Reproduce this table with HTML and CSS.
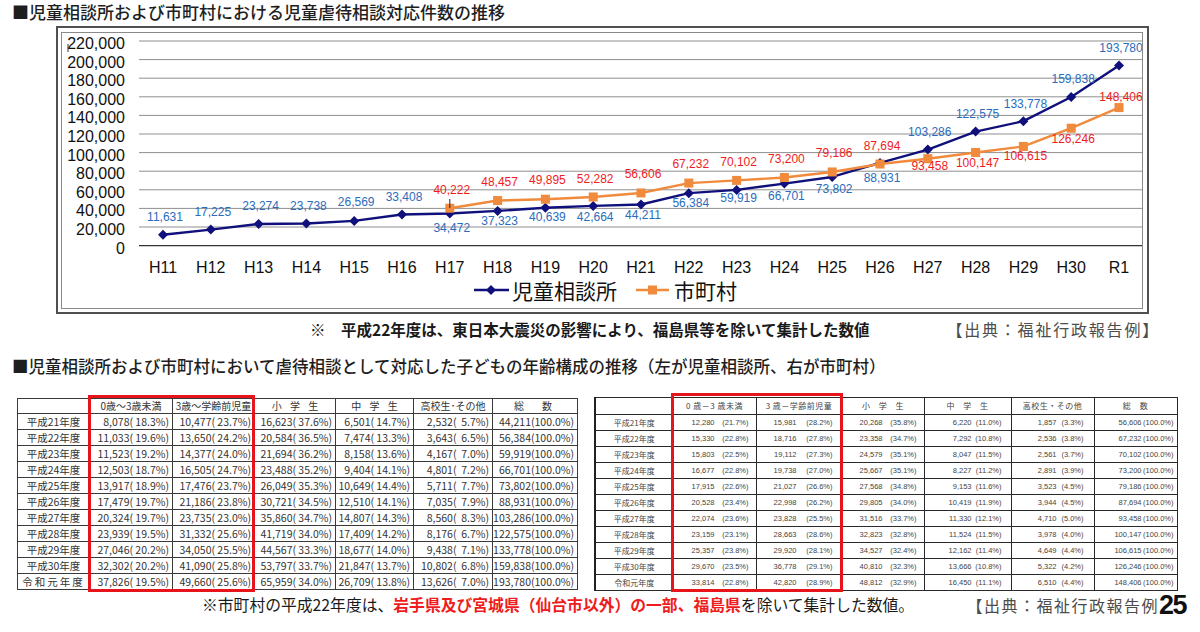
FILE: index.html
```html
<!DOCTYPE html>
<html lang="ja">
<head>
<meta charset="utf-8">
<title>児童虐待相談対応件数の推移</title>
<link rel="stylesheet" href="styles.css">
</head>
<body>
<div class="page">
  <h1 class="sec-title t1">■児童相談所および市町村における児童虐待相談対応件数の推移</h1>
  <div class="chart-frame">
    <div class="chart-inner">
      <svg id="chart" class="chart" width="1080" height="275" viewBox="62 33 1080 275" xmlns="http://www.w3.org/2000/svg"></svg>
    </div>
  </div>
  <div class="note-row">
    <p class="note">※　平成22年度は、東日本大震災の影響により、福島県等を除いて集計した数値</p>
    <p class="source">【出典：福祉行政報告例】</p>
  </div>
  <h2 class="sec-title t2">■児童相談所および市町村において虐待相談として対応した子どもの年齢構成の推移（左が児童相談所、右が市町村）</h2>
  <div class="tables">
    <div class="tbl-wrap tbl-left">
      <table class="age-table lt">
        <colgroup><col class="c1"><col class="c2"><col class="c3"><col class="c4"><col class="c5"><col class="c6"><col class="c7"></colgroup>
        <tr class="hd"><th></th><th>0歳～3歳未満</th><th>3歳～学齢前児童</th><th class="wide">小 学 生</th><th class="wide">中 学 生</th><th>高校生･その他</th><th class="wide2">総　数</th></tr>
        <tr><th>平成21年度</th><td> 8,078( 18.3%)</td><td>10,477( 23.7%)</td><td>16,623( 37.6%)</td><td>6,501( 14.7%)</td><td>2,532(  5.7%)</td><td>44,211(100.0%)</td></tr>
        <tr><th>平成22年度</th><td>11,033( 19.6%)</td><td>13,650( 24.2%)</td><td>20,584( 36.5%)</td><td>7,474( 13.3%)</td><td>3,643(  6.5%)</td><td>56,384(100.0%)</td></tr>
        <tr><th>平成23年度</th><td>11,523( 19.2%)</td><td>14,377( 24.0%)</td><td>21,694( 36.2%)</td><td>8,158( 13.6%)</td><td>4,167(  7.0%)</td><td>59,919(100.0%)</td></tr>
        <tr><th>平成24年度</th><td>12,503( 18.7%)</td><td>16,505( 24.7%)</td><td>23,488( 35.2%)</td><td>9,404( 14.1%)</td><td>4,801(  7.2%)</td><td>66,701(100.0%)</td></tr>
        <tr><th>平成25年度</th><td>13,917( 18.9%)</td><td>17,476( 23.7%)</td><td>26,049( 35.3%)</td><td>10,649( 14.4%)</td><td>5,711(  7.7%)</td><td>73,802(100.0%)</td></tr>
        <tr><th>平成26年度</th><td>17,479( 19.7%)</td><td>21,186( 23.8%)</td><td>30,721( 34.5%)</td><td>12,510( 14.1%)</td><td>7,035(  7.9%)</td><td>88,931(100.0%)</td></tr>
        <tr><th>平成27年度</th><td>20,324( 19.7%)</td><td>23,735( 23.0%)</td><td>35,860( 34.7%)</td><td>14,807( 14.3%)</td><td>8,560(  8.3%)</td><td>103,286(100.0%)</td></tr>
        <tr><th>平成28年度</th><td>23,939( 19.5%)</td><td>31,332( 25.6%)</td><td>41,719( 34.0%)</td><td>17,409( 14.2%)</td><td>8,176(  6.7%)</td><td>122,575(100.0%)</td></tr>
        <tr><th>平成29年度</th><td>27,046( 20.2%)</td><td>34,050( 25.5%)</td><td>44,567( 33.3%)</td><td>18,677( 14.0%)</td><td>9,438(  7.1%)</td><td>133,778(100.0%)</td></tr>
        <tr><th>平成30年度</th><td>32,302( 20.2%)</td><td>41,090( 25.8%)</td><td>53,797( 33.7%)</td><td>21,847( 13.7%)</td><td>10,802(  6.8%)</td><td>159,838(100.0%)</td></tr>
        <tr><th class="reiwa">令和元年度</th><td>37,826( 19.5%)</td><td>49,660( 25.6%)</td><td>65,959( 34.0%)</td><td>26,709( 13.8%)</td><td>13,626(  7.0%)</td><td>193,780(100.0%)</td></tr>
      </table>
      <div class="red-box rb-left"></div>
    </div>
    <div class="tbl-wrap tbl-right">
      <table class="age-table rt">
        <colgroup><col class="c1"><col class="c2"><col class="c3"><col class="c4"><col class="c5"><col class="c6"><col class="c7"></colgroup>
        <tr class="hd"><th></th><th>0 歳－3 歳未満</th><th>3 歳－学齢前児童</th><th class="wide">小 学 生</th><th class="wide">中 学 生</th><th>高校生・その他</th><th class="wide2">総　数</th></tr>
        <tr><th>平成21年度</th><td><span class="n">12,280</span><span class="p">(21.7%)</span></td><td><span class="n">15,981</span><span class="p">(28.2%)</span></td><td><span class="n">20,268</span><span class="p">(35.8%)</span></td><td><span class="n">6,220</span><span class="p">(11.0%)</span></td><td><span class="n">1,857</span><span class="p">(3.3%)</span></td><td><span class="n">56,606</span><span class="p">(100.0%)</span></td></tr>
        <tr><th>平成22年度</th><td><span class="n">15,330</span><span class="p">(22.8%)</span></td><td><span class="n">18,716</span><span class="p">(27.8%)</span></td><td><span class="n">23,358</span><span class="p">(34.7%)</span></td><td><span class="n">7,292</span><span class="p">(10.8%)</span></td><td><span class="n">2,536</span><span class="p">(3.8%)</span></td><td><span class="n">67,232</span><span class="p">(100.0%)</span></td></tr>
        <tr><th>平成23年度</th><td><span class="n">15,803</span><span class="p">(22.5%)</span></td><td><span class="n">19,112</span><span class="p">(27.3%)</span></td><td><span class="n">24,579</span><span class="p">(35.1%)</span></td><td><span class="n">8,047</span><span class="p">(11.5%)</span></td><td><span class="n">2,561</span><span class="p">(3.7%)</span></td><td><span class="n">70,102</span><span class="p">(100.0%)</span></td></tr>
        <tr><th>平成24年度</th><td><span class="n">16,677</span><span class="p">(22.8%)</span></td><td><span class="n">19,738</span><span class="p">(27.0%)</span></td><td><span class="n">25,667</span><span class="p">(35.1%)</span></td><td><span class="n">8,227</span><span class="p">(11.2%)</span></td><td><span class="n">2,891</span><span class="p">(3.9%)</span></td><td><span class="n">73,200</span><span class="p">(100.0%)</span></td></tr>
        <tr><th>平成25年度</th><td><span class="n">17,915</span><span class="p">(22.6%)</span></td><td><span class="n">21,027</span><span class="p">(26.6%)</span></td><td><span class="n">27,568</span><span class="p">(34.8%)</span></td><td><span class="n">9,153</span><span class="p">(11.6%)</span></td><td><span class="n">3,523</span><span class="p">(4.5%)</span></td><td><span class="n">79,186</span><span class="p">(100.0%)</span></td></tr>
        <tr><th>平成26年度</th><td><span class="n">20,528</span><span class="p">(23.4%)</span></td><td><span class="n">22,998</span><span class="p">(26.2%)</span></td><td><span class="n">29,805</span><span class="p">(34.0%)</span></td><td><span class="n">10,419</span><span class="p">(11.9%)</span></td><td><span class="n">3,944</span><span class="p">(4.5%)</span></td><td><span class="n">87,694</span><span class="p">(100.0%)</span></td></tr>
        <tr><th>平成27年度</th><td><span class="n">22,074</span><span class="p">(23.6%)</span></td><td><span class="n">23,828</span><span class="p">(25.5%)</span></td><td><span class="n">31,516</span><span class="p">(33.7%)</span></td><td><span class="n">11,330</span><span class="p">(12.1%)</span></td><td><span class="n">4,710</span><span class="p">(5.0%)</span></td><td><span class="n">93,458</span><span class="p">(100.0%)</span></td></tr>
        <tr><th>平成28年度</th><td><span class="n">23,159</span><span class="p">(23.1%)</span></td><td><span class="n">28,663</span><span class="p">(28.6%)</span></td><td><span class="n">32,823</span><span class="p">(32.8%)</span></td><td><span class="n">11,524</span><span class="p">(11.5%)</span></td><td><span class="n">3,978</span><span class="p">(4.0%)</span></td><td><span class="n">100,147</span><span class="p">(100.0%)</span></td></tr>
        <tr><th>平成29年度</th><td><span class="n">25,357</span><span class="p">(23.8%)</span></td><td><span class="n">29,920</span><span class="p">(28.1%)</span></td><td><span class="n">34,527</span><span class="p">(32.4%)</span></td><td><span class="n">12,162</span><span class="p">(11.4%)</span></td><td><span class="n">4,649</span><span class="p">(4.4%)</span></td><td><span class="n">106,615</span><span class="p">(100.0%)</span></td></tr>
        <tr><th>平成30年度</th><td><span class="n">29,670</span><span class="p">(23.5%)</span></td><td><span class="n">36,778</span><span class="p">(29.1%)</span></td><td><span class="n">40,810</span><span class="p">(32.3%)</span></td><td><span class="n">13,666</span><span class="p">(10.8%)</span></td><td><span class="n">5,322</span><span class="p">(4.2%)</span></td><td><span class="n">126,246</span><span class="p">(100.0%)</span></td></tr>
        <tr><th>令和元年度</th><td><span class="n">33,814</span><span class="p">(22.8%)</span></td><td><span class="n">42,820</span><span class="p">(28.9%)</span></td><td><span class="n">48,812</span><span class="p">(32.9%)</span></td><td><span class="n">16,450</span><span class="p">(11.1%)</span></td><td><span class="n">6,510</span><span class="p">(4.4%)</span></td><td><span class="n">148,406</span><span class="p">(100.0%)</span></td></tr>
      </table>
      <div class="red-box rb-right"></div>
    </div>
  </div>
  <div class="footer">
    <p class="foot-note">※市町村の平成22年度は、<span class="hl">岩手県及び宮城県（仙台市以外）の一部、福島県</span>を除いて集計した数値。</p>
    <p class="source foot-source">【出典：福祉行政報告例</p>
    <span class="page-no">25</span>
  </div>
</div>
<script src="chart.js"></script>
</body>
</html>
```

FILE: styles.css
```css
html, body {
  margin: 0;
  padding: 0;
  background: #fff;
}
.page {
  width: 1200px;
  height: 632px;
  overflow: hidden;
  background: #fff;
  font-family: "Noto Sans CJK JP", "Liberation Sans", sans-serif;
  color: #222;
}
.sec-title {
  margin: 0;
  padding-left: 12px;
  font-size: 16.5px;
  line-height: 22px;
  font-weight: 500;
  color: #1e1e1e;
  white-space: nowrap;
}
.t1 { margin-bottom: 2px; font-size: 17px; line-height: 24px; }
.t2 { margin-top: 17px; }

.chart-frame {
  box-sizing: border-box;
  margin-left: 56px;
  width: 1093px;
  height: 288px;
  border: 2px solid #505050;
  padding: 4px 4px 3px 3px;
}
.chart-inner {
  width: 1080px;
  height: 275px;
  border: 1px solid #8a8a8a;
}
.chart {
  display: block;
  font-family: "Liberation Sans", Arial, sans-serif;
}
.chart .ylab { font-size: 16px; fill: #111; }
.chart .xlab { font-size: 16px; fill: #111; }
.chart .blab { font-size: 12px; fill: #2a6cbd; }
.chart .rlab { font-size: 12px; fill: #f01c1c; }
.chart .leg { font-size: 21px; fill: #111; font-family: "Noto Sans CJK JP", sans-serif; }

.note-row {
  display: flex;
  align-items: center;
  height: 18px;
  margin-top: 6px;
}
.note {
  margin: 0 0 0 310px;
  font-size: 15.5px;
  line-height: 18px;
  font-weight: 700;
  color: #1a1a1a;
  white-space: nowrap;
}
.source {
  margin: 0 40px 0 auto;
  font-size: 16px;
  line-height: 18px;
  letter-spacing: 1.8px;
  color: #4d4d4d;
  white-space: nowrap;
}

.tables {
  display: flex;
  align-items: flex-start;
  height: 197px;
  margin-top: 20px;
  padding-left: 17px;
  gap: 16px;
}
.tbl-wrap { position: relative; }
.tbl-left { margin-top: 1px; }

.age-table {
  border-collapse: collapse;
  table-layout: fixed;
}
.age-table th, .age-table td {
  padding: 0;
  white-space: pre;
  overflow: hidden;
}

/* left table */
.lt {
  width: 560px;
  border: 1.5px solid #333;
  font-size: 10.5px;
  color: #333;
}
.lt .c1 { width: 72px; }
.lt .c2 { width: 83px; }
.lt .c3 { width: 82px; }
.lt .c4 { width: 81px; }
.lt .c5 { width: 78px; }
.lt .c6 { width: 79px; }
.lt .c7 { width: 85px; }
.lt tr { height: 16px; }
.lt tr.hd { height: 15px; }
.lt th, .lt td {
  border: 1px solid #3a3a3a;
  line-height: 14px;
}
.lt th { font-weight: 400; text-align: center; font-size: 10.5px; }
.lt td { text-align: right; padding-right: 3px; }
.lt .hd th { font-size: 10px; }
.lt .reiwa { letter-spacing: 2px; }
.age-table .wide { word-spacing: 6px; }
.age-table .wide2 { letter-spacing: 4px; }

/* right table */
.rt {
  width: 582px;
  border: 1px solid #222;
  border-left-width: 2px;
  font-size: 8px;
  color: #444;
}
.rt .c1 { width: 78px; }
.rt .c2 { width: 83px; }
.rt .c3 { width: 86px; }
.rt .c4 { width: 82px; }
.rt .c5 { width: 87px; }
.rt .c6 { width: 83px; }
.rt .c7 { width: 83px; }
.rt tr { height: 16px; }
.rt tr.hd { height: 17px; }
.rt th, .rt td {
  border: 1px solid #2a2a2a;
  line-height: 14px;
  white-space: nowrap;
}
.rt th { font-weight: 400; text-align: center; }
.rt .hd th { letter-spacing: 0.5px; }
.rt td {
  text-align: left;
  font-family: "Liberation Sans", Arial, sans-serif;
  font-size: 7.5px;
}
.rt .n, .rt .p { display: inline-block; text-align: right; }
.rt td:nth-child(2) .n { width: 41px; }
.rt td:nth-child(2) .p { width: 34px; }
.rt td:nth-child(3) .n { width: 40px; }
.rt td:nth-child(3) .p { width: 36px; }
.rt td:nth-child(4) .n { width: 40px; }
.rt td:nth-child(4) .p { width: 34px; }
.rt td:nth-child(5) .n { width: 47px; }
.rt td:nth-child(5) .p { width: 30px; }
.rt td:nth-child(6) .n { width: 45px; }
.rt td:nth-child(6) .p { width: 27px; }
.rt td:nth-child(7) .n { width: 47px; }
.rt td:nth-child(7) .p { width: 32px; }

.red-box {
  position: absolute;
  box-sizing: border-box;
  border: 3px solid #e8141b;
  pointer-events: none;
}
.rb-left { left: 71px; top: -3px; width: 167px; height: 197px; }
.rb-right { left: 77px; top: -4px; width: 172px; height: 199px; }

.footer {
  display: flex;
  align-items: center;
  height: 22px;
}
.foot-note {
  margin: 0 0 0 202px;
  font-size: 15.8px;
  line-height: 22px;
  color: #1a1a1a;
  white-space: nowrap;
}
.hl { color: #ee1c1c; font-weight: 700; }
.foot-source { margin-right: 0; letter-spacing: 1.5px; }
.page-no {
  margin: 0 14px 0 0;
  font-family: "Liberation Sans", Arial, sans-serif;
  font-weight: 700;
  font-size: 27px;
  line-height: 22px;
  letter-spacing: -1.5px;
  color: #111;
}
```

FILE: chart.js
```js
(function () {
  var NS = "http://www.w3.org/2000/svg";
  var svg = document.getElementById("chart");
  var X0 = 163, DX = 47.8, Y0 = 245.6, YS = 204.6 / 220000;
  var years = ["H11","H12","H13","H14","H15","H16","H17","H18","H19","H20","H21","H22","H23","H24","H25","H26","H27","H28","H29","H30","R1"];
  var jido = [11631,17225,23274,23738,26569,33408,34472,37323,40639,42664,44211,56384,59919,66701,73802,88931,103286,122575,133778,159838,193780];
  var shi = [null,null,null,null,null,null,40222,48457,49895,52282,56606,67232,70102,73200,79186,87694,93458,100147,106615,126246,148406];
  var blueY = [217,212,206,206,202,197,228,221,216.7,216.7,214.7,203,198,195.7,189,177.7,131.7,113.7,103.3,78.7,47.7];
  var redY = [0,0,0,0,0,0,190,182,180,179,174,163.7,161.7,159,152.7,145.3,165.7,163,155.7,139,96.3];

  function el(name, attrs, text) {
    var e = document.createElementNS(NS, name);
    for (var k in attrs) e.setAttribute(k, attrs[k]);
    if (text !== undefined) e.textContent = text;
    svg.appendChild(e);
    return e;
  }
  function fmt(v) { return v.toString().replace(/\B(?=(\d{3})+(?!\d))/g, ","); }
  function px(i) { return X0 + DX * i; }
  function py(v) { return Y0 - v * YS; }

  // gridlines + y labels
  for (var k = 0; k <= 11; k++) {
    var y = Y0 - k * 18.6;
    el("line", { x1: 139, x2: 1142, y1: y, y2: y, stroke: k === 0 ? "#333" : "#8f8f8f", "stroke-width": k === 0 ? 1.4 : 1 });
    el("text", { x: 125, y: y + 8, "text-anchor": "end", "class": "ylab" }, fmt(k * 20000));
  }
  el("line", { x1: 68, x2: 68, y1: 44, y2: 52, stroke: "#333", "stroke-width": 1 });

  // x labels
  years.forEach(function (t, i) {
    el("text", { x: px(i), y: 273, "text-anchor": "middle", "class": "xlab" }, t);
  });

  // blue series
  var pts = jido.map(function (v, i) { return px(i) + "," + py(v); }).join(" ");
  el("polyline", { points: pts, fill: "none", stroke: "#10107c", "stroke-width": 2.4, "stroke-linejoin": "round" });
  jido.forEach(function (v, i) {
    var x = px(i), y = py(v);
    el("polygon", { points: x + "," + (y - 5) + " " + (x + 5) + "," + y + " " + x + "," + (y + 5) + " " + (x - 5) + "," + y, fill: "#10107c" });
  });

  // orange series
  var opts = [];
  shi.forEach(function (v, i) { if (v !== null) opts.push(px(i) + "," + py(v)); });
  el("polyline", { points: opts.join(" "), fill: "none", stroke: "#f08a3c", "stroke-width": 2.4, "stroke-linejoin": "round" });
  shi.forEach(function (v, i) {
    if (v === null) return;
    el("rect", { x: px(i) - 4.5, y: py(v) - 4.5, width: 9, height: 9, fill: "#f08a3c" });
  });
  el("line", { x1: px(6), x2: px(6), y1: 199, y2: 208, stroke: "#222", "stroke-width": 1 });

  // data labels
  jido.forEach(function (v, i) {
    el("text", { x: px(i) + 2, y: blueY[i] + 4.3, "text-anchor": "middle", "class": "blab" }, fmt(v));
  });
  shi.forEach(function (v, i) {
    if (v === null) return;
    el("text", { x: px(i) + 2, y: redY[i] + 4.3, "text-anchor": "middle", "class": "rlab" }, fmt(v));
  });

  // legend
  el("line", { x1: 474, x2: 509, y1: 290, y2: 290, stroke: "#10107c", "stroke-width": 2.6 });
  el("polygon", { points: "491,285 496,290 491,295 486,290", fill: "#10107c" });
  el("text", { x: 512, y: 298.5, "class": "leg" }, "児童相談所");
  el("line", { x1: 636, x2: 669, y1: 290, y2: 290, stroke: "#f08a3c", "stroke-width": 2.6 });
  el("rect", { x: 648, y: 285.5, width: 9, height: 9, fill: "#f08a3c" });
  el("text", { x: 674, y: 298.5, "class": "leg" }, "市町村");
})();
```
